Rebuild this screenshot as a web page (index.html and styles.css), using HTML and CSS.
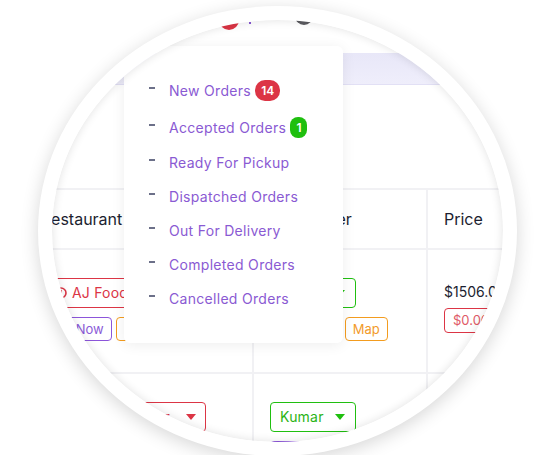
FILE: index.html
```html
<!DOCTYPE html>
<html lang="en">
<head>
<meta charset="utf-8">
<title>Orders menu</title>
<link rel="stylesheet" href="styles.css">
</head>
<body>
<div class="lens">
  <div class="scene">
    <div class="topbar">
      <span class="notif"></span>
      <span class="dot"></span>
      <span class="avatar"></span>
    </div>
    <div class="tabbar"></div>
    <table class="orders">
      <colgroup>
        <col class="c1"><col class="c2"><col class="c3">
      </colgroup>
      <thead>
        <tr><th>Restaurant</th><th>Dispatcher</th><th>Price</th></tr>
      </thead>
      <tbody>
        <tr>
          <td>
            <div class="select red wide">
              <svg class="ico" width="14" height="14" viewBox="0 0 14 14"><circle cx="7" cy="7" r="5" fill="none" stroke="#dc3545" stroke-width="1.6"/><path d="M7 4.5v3" stroke="#dc3545" stroke-width="1.6" stroke-linecap="round"/></svg>
              <span class="name">AJ Foods</span>
              <i class="caret"></i>
            </div>
            <div class="btns"><span class="btn purple">Call Now</span><span class="btn orange">Map</span></div>
          </td>
          <td>
            <div class="select green"><span>Kumar</span><i class="caret"></i></div>
            <div class="btns"><span class="btn purple">Call Now</span><span class="btn orange">Map</span></div>
          </td>
          <td class="price">
            <div class="amount">$1506.00</div>
            <div class="due">$0.00</div>
          </td>
        </tr>
        <tr>
          <td>
            <div class="select red wide">
              <svg class="ico" width="14" height="14" viewBox="0 0 14 14"><circle cx="7" cy="7" r="5" fill="none" stroke="#dc3545" stroke-width="1.6"/></svg>
              <span class="name push">Royal Burger</span>
              <i class="caret"></i>
            </div>
          </td>
          <td>
            <div class="select green"><span>Kumar</span><i class="caret"></i></div>
            <div class="btns"><span class="btn purple">Call Now</span><span class="btn orange">Map</span></div>
          </td>
          <td class="price">
            <div class="amount">$820.00</div>
          </td>
        </tr>
      </tbody>
    </table>
  </div>
  <ul class="menu">
    <li class="has-badge">New Orders <span class="badge red-bg">14</span></li>
    <li class="has-badge">Accepted Orders <span class="badge green-bg">1</span></li>
    <li>Ready For Pickup</li>
    <li>Dispatched Orders</li>
    <li>Out For Delivery</li>
    <li>Completed Orders</li>
    <li>Cancelled Orders</li>
  </ul>
</div>
</body>
</html>
```

FILE: styles.css
```css
html, body {
  margin: 0;
  height: 100%;
  overflow: hidden;
  background: #fff;
  font-family: "Inter", "Liberation Sans", sans-serif;
}

.lens {
  position: relative;
  box-sizing: border-box;
  width: 479px;
  height: 450px;
  margin: 6px 0 0 38px;
  border: 14px solid #fff;
  border-radius: 50%;
  overflow: hidden;
  background: #fff;
  box-shadow: 0 4px 18px rgba(0, 0, 0, 0.16);
}

.lens::after {
  content: "";
  position: absolute;
  inset: 0;
  border-radius: 50%;
  box-shadow: inset 0 0 10px rgba(0, 0, 0, 0.12);
  pointer-events: none;
  z-index: 5;
}

.scene {
  width: 451px;
  height: 422px;
}

.topbar {
  height: 33px;
  display: flex;
  align-items: flex-start;
  padding-left: 167px;
}

.notif {
  width: 20px;
  height: 20px;
  margin-top: -10px;
  border-radius: 50%;
  background: #dc3545;
}

.dot {
  width: 2px;
  height: 2px;
  margin: 2px 0 0 10px;
  background: #8757d4;
}

.avatar {
  width: 18px;
  height: 18px;
  margin: -13px 0 0 44px;
  border-radius: 50%;
  background: #5b5b60;
}

.tabbar {
  height: 31px;
  background: linear-gradient(180deg, #e8e7f8 0%, #efeefb 100%);
  border-bottom: 1px solid #e2e0f5;
}

.orders {
  margin: 103px 0 0 -29px;
  table-layout: fixed;
  width: 553px;
  border-collapse: collapse;
  color: #1c1e30;
}

.c1 { width: 229px; }
.c2 { width: 174px; }
.c3 { width: 150px; }

.orders th,
.orders td {
  border: 2px solid #f1f1f4;
  text-align: left;
  padding: 0 16px;
}

.orders th {
  height: 58px;
  font-size: 16px;
  font-weight: 400;
}

.orders td {
  vertical-align: top;
  padding-top: 28px;
  padding-bottom: 31px;
}

.orders td.price {
  padding-top: 32px;
}

.select {
  box-sizing: border-box;
  display: inline-flex;
  align-items: center;
  height: 30px;
  padding: 0 9px 0 9px;
  border: 1px solid;
  border-radius: 4px;
  font-size: 14px;
  line-height: 20px;
  gap: 11px;
  letter-spacing: 0.2px;
}

.select.red {
  color: #dc3545;
  border-color: #dc3545;
}

.select.wide {
  width: 165px;
  gap: 4px;
  padding-left: 12px;
}

.select.wide .name {
  flex: 1;
}

.select.wide .name.push {
  text-align: right;
  margin-right: 12px;
}

.select.green {
  width: 86px;
  color: #2bb417;
  border-color: #20bf10;
}

.select.green .caret {
  color: #1fbf0f;
}

.caret {
  width: 0;
  height: 0;
  border-left: 5px solid transparent;
  border-right: 5px solid transparent;
  border-top: 6px solid currentColor;
}

.btns {
  display: flex;
  gap: 4px;
  margin-top: 9px;
}

.btn {
  box-sizing: border-box;
  height: 24px;
  padding: 0 7px;
  border: 1px solid;
  border-radius: 4px;
  font-size: 13px;
  line-height: 22px;
}

.btn.purple {
  color: #8b5bd8;
  border-color: #8c55da;
}

.btn.orange {
  color: #f29b2b;
  border-color: #f39c1f;
}

.amount {
  font-size: 14px;
  line-height: 20px;
}

.due {
  display: inline-block;
  box-sizing: border-box;
  height: 25px;
  margin-top: 6px;
  padding: 0 8px;
  border: 1px solid #dc3545;
  border-radius: 4px;
  color: #e05a67;
  font-size: 13px;
  line-height: 23px;
}

.menu {
  position: absolute;
  left: 72px;
  top: 26px;
  z-index: 3;
  box-sizing: border-box;
  width: 219px;
  height: 297px;
  margin: 0;
  padding: 26px 0 0 25px;
  list-style: none;
  background: #fff;
  border-radius: 6px;
  box-shadow: 0 2px 14px rgba(0, 0, 0, 0.07);
}

.menu li {
  display: flex;
  align-items: center;
  padding: 7px 0;
  font-size: 14px;
  line-height: 20px;
  letter-spacing: 0.3px;
  color: #8a5ad3;
  white-space: pre;
}

.menu li.has-badge {
  padding: 8px 0;
}

.menu li::before {
  content: "";
  width: 6px;
  height: 2px;
  margin: 0 14px 6px 0;
  background: #6c7089;
}

.badge {
  display: inline-flex;
  align-items: center;
  justify-content: center;
  height: 21px;
  padding: 0 6px;
  border-radius: 10px;
  color: #fff;
  font-size: 12px;
  font-weight: 600;
  letter-spacing: 0;
}

.red-bg { background: #dc3545; }
.green-bg { background: #1fbf0f; border-radius: 8px; }
```
